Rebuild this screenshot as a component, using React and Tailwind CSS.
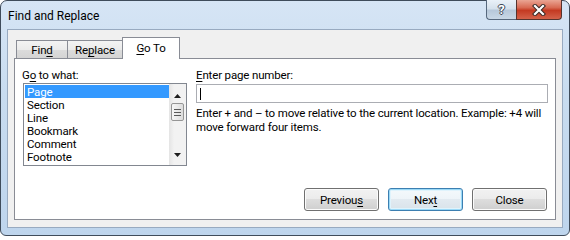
import React from "react";

function WinButton({ children, def }) {
  return (
    <div
      className={
        "w-[75px] h-[23px] rounded-[3px] border flex items-center justify-center text-black " +
        (def
          ? "border-[#3c7fb1] bg-[linear-gradient(to_bottom,#f4f9fc_0%,#eef4f8_50%,#e2eaf0_50%,#d9e3ea_100%)] shadow-[inset_0_0_0_1px_#9ad9f7,inset_0_0_0_2px_#dff3fc]"
          : "border-[#707070] bg-[linear-gradient(to_bottom,#f2f2f2_0%,#ebebeb_50%,#dddddd_50%,#cfcfcf_100%)] shadow-[inset_0_0_0_1px_#fbfbfb]")
      }
    >
      <span className="leading-[14px]">{children}</span>
    </div>
  );
}

export default function App() {
  const items = ["Page", "Section", "Line", "Bookmark", "Comment", "Footnote"];
  return (
    <div className="w-[570px] h-[236px] bg-white font-['Roboto',sans-serif] text-[11.5px] tracking-[-0.15px] text-black">
      <div className="w-full h-full flex flex-col rounded-t-[7px] rounded-b-[6px] border border-[#3f4c5b] bg-[linear-gradient(to_bottom,#d6e5f5_0%,#c8dcf0_40%,#bed5ed_100%)] px-[6px] pb-[7px]">
        {/* title bar */}
        <div className="h-[28px] shrink-0 flex items-start">
          <div className="pl-[1px] pt-[8px] text-[12px] leading-[14px] tracking-normal">Find and Replace</div>
          <div className="flex-1" />
          <div className="flex -mt-px mr-[1px]">
            <div className="w-[30px] h-[20px] rounded-bl-[4px] border border-r-0 border-t-0 border-[#56687d] bg-[linear-gradient(to_bottom,#eaf1f8_0%,#d5e1ec_45%,#b7c8da_55%,#c9d8e6_100%)] flex items-center justify-center">
              <span className="text-white font-bold text-[13px] leading-[13px] [text-shadow:1px_0_0_#3a4656,-1px_0_0_#3a4656,0_1px_0_#3a4656,0_-1px_0_#3a4656]">
                ?
              </span>
            </div>
            <div className="w-[46px] h-[20px] rounded-br-[4px] border border-t-0 border-[#56342e] bg-[linear-gradient(to_bottom,#eaa594_0%,#d86a53_40%,#c43a22_55%,#d4624a_100%)] flex items-center justify-center">
              <svg width="14" height="12" viewBox="0 0 14 12">
                <path d="M3 2 L11 10 M11 2 L3 10" stroke="#3a2a26" strokeWidth="4.2" strokeLinecap="square" />
                <path d="M3 2 L11 10 M11 2 L3 10" stroke="#ffffff" strokeWidth="2.2" strokeLinecap="square" />
              </svg>
            </div>
          </div>
        </div>

        {/* client area */}
        <div className="flex-1 flex flex-col border border-[#98aac0] bg-[#f0f0f0] px-[6px] pt-[7px] pb-[7px]">
          {/* tabs */}
          <div className="h-[21px] shrink-0 flex items-end pl-[2px]">
            <div className="w-[52px] h-[18px] border border-b-0 border-[#898c95] bg-[linear-gradient(to_bottom,#f3f3f3_0%,#ebebeb_50%,#dcdcdc_51%,#d4d4d4_100%)] flex justify-center pt-[2px]">
              <span className="leading-[14px]">
                Fin<span className="underline underline-offset-2">d</span>
              </span>
            </div>
            <div className="w-[54px] h-[18px] border-t border-[#898c95] bg-[linear-gradient(to_bottom,#f3f3f3_0%,#ebebeb_50%,#dcdcdc_51%,#d4d4d4_100%)] flex justify-center pt-[2px]">
              <span className="leading-[14px]">
                Re<span className="underline underline-offset-2">p</span>lace
              </span>
            </div>
            <div className="relative z-10 -mb-px w-[58px] h-[22px] border border-b-0 border-[#898c95] bg-white flex justify-center pt-[3px]">
              <span className="leading-[14px]">
                <span className="underline underline-offset-2">G</span>o To
              </span>
            </div>
          </div>

          {/* panel */}
          <div className="flex-1 flex flex-col border border-[#898c95] bg-white">
            <div className="flex pl-[8px] pt-[9px]">
              {/* left column */}
              <div className="w-[164px] flex flex-col">
                <div className="leading-[14px] -ml-px">
                  G<span className="underline underline-offset-2">o</span> to what:
                </div>
                <div className="mt-[1px] h-[83px] border border-[#828790] flex">
                  <div className="flex-1 flex flex-col pt-[1px] pl-[1px]">
                    {items.map((it, i) => (
                      <div
                        key={it}
                        className={
                          "h-[13px] leading-[13px] pl-[2px] pt-[1px] " +
                          (i === 0 ? "bg-[#3399ff] text-white" : "")
                        }
                      >
                        {it}
                      </div>
                    ))}
                  </div>
                  {/* scrollbar */}
                  <div className="w-[17px] flex flex-col items-center bg-[linear-gradient(to_right,#e4e4e4_0%,#f2f2f2_30%,#f2f2f2_100%)]">
                    <div className="h-[17px] flex items-end justify-center pb-[3px]">
                      <svg width="7" height="4" viewBox="0 0 7 4">
                        <path d="M0 4 L3.5 0 L7 4 Z" fill="#1e1e1e" />
                      </svg>
                    </div>
                    <div className="mt-[2px] w-[13px] h-[18px] rounded-[2px] border border-[#959595] bg-[linear-gradient(to_right,#f6f6f6_0%,#eaeaea_50%,#dcdcdc_100%)] flex flex-col items-center justify-center gap-[2px]">
                      <div className="w-[7px] h-px bg-[#5a5a5a]" />
                      <div className="w-[7px] h-px bg-[#5a5a5a]" />
                      <div className="w-[7px] h-px bg-[#5a5a5a]" />
                    </div>
                    <div className="flex-1" />
                    <div className="h-[17px] flex items-start justify-center pt-[5px]">
                      <svg width="7" height="4" viewBox="0 0 7 4">
                        <path d="M0 0 L7 0 L3.5 4 Z" fill="#1e1e1e" />
                      </svg>
                    </div>
                  </div>
                </div>
              </div>

              {/* right column */}
              <div className="ml-[9px] w-[352px] flex flex-col">
                <div className="leading-[14px]">
                  <span className="underline underline-offset-2">E</span>nter page number:
                </div>
                <div className="mt-[2px] h-[19px] border border-[#abadb3] bg-white flex items-center pl-[3px]">
                  <div className="w-px h-[12px] bg-black" />
                </div>
                <div className="mt-[3px] leading-[14px] whitespace-nowrap">
                  Enter + and – to move relative to the current location. Example: +4 will
                  <br />
                  move forward four items.
                </div>
              </div>
            </div>

            <div className="flex-1" />

            {/* buttons */}
            <div className="flex justify-end gap-[9px] pr-[8px] pb-[8px]">
              <WinButton>
                Previou<span className="underline underline-offset-2">s</span>
              </WinButton>
              <WinButton def>
                Nex<span className="underline underline-offset-2">t</span>
              </WinButton>
              <WinButton>Close</WinButton>
            </div>
          </div>
        </div>
      </div>
    </div>
  );
}
